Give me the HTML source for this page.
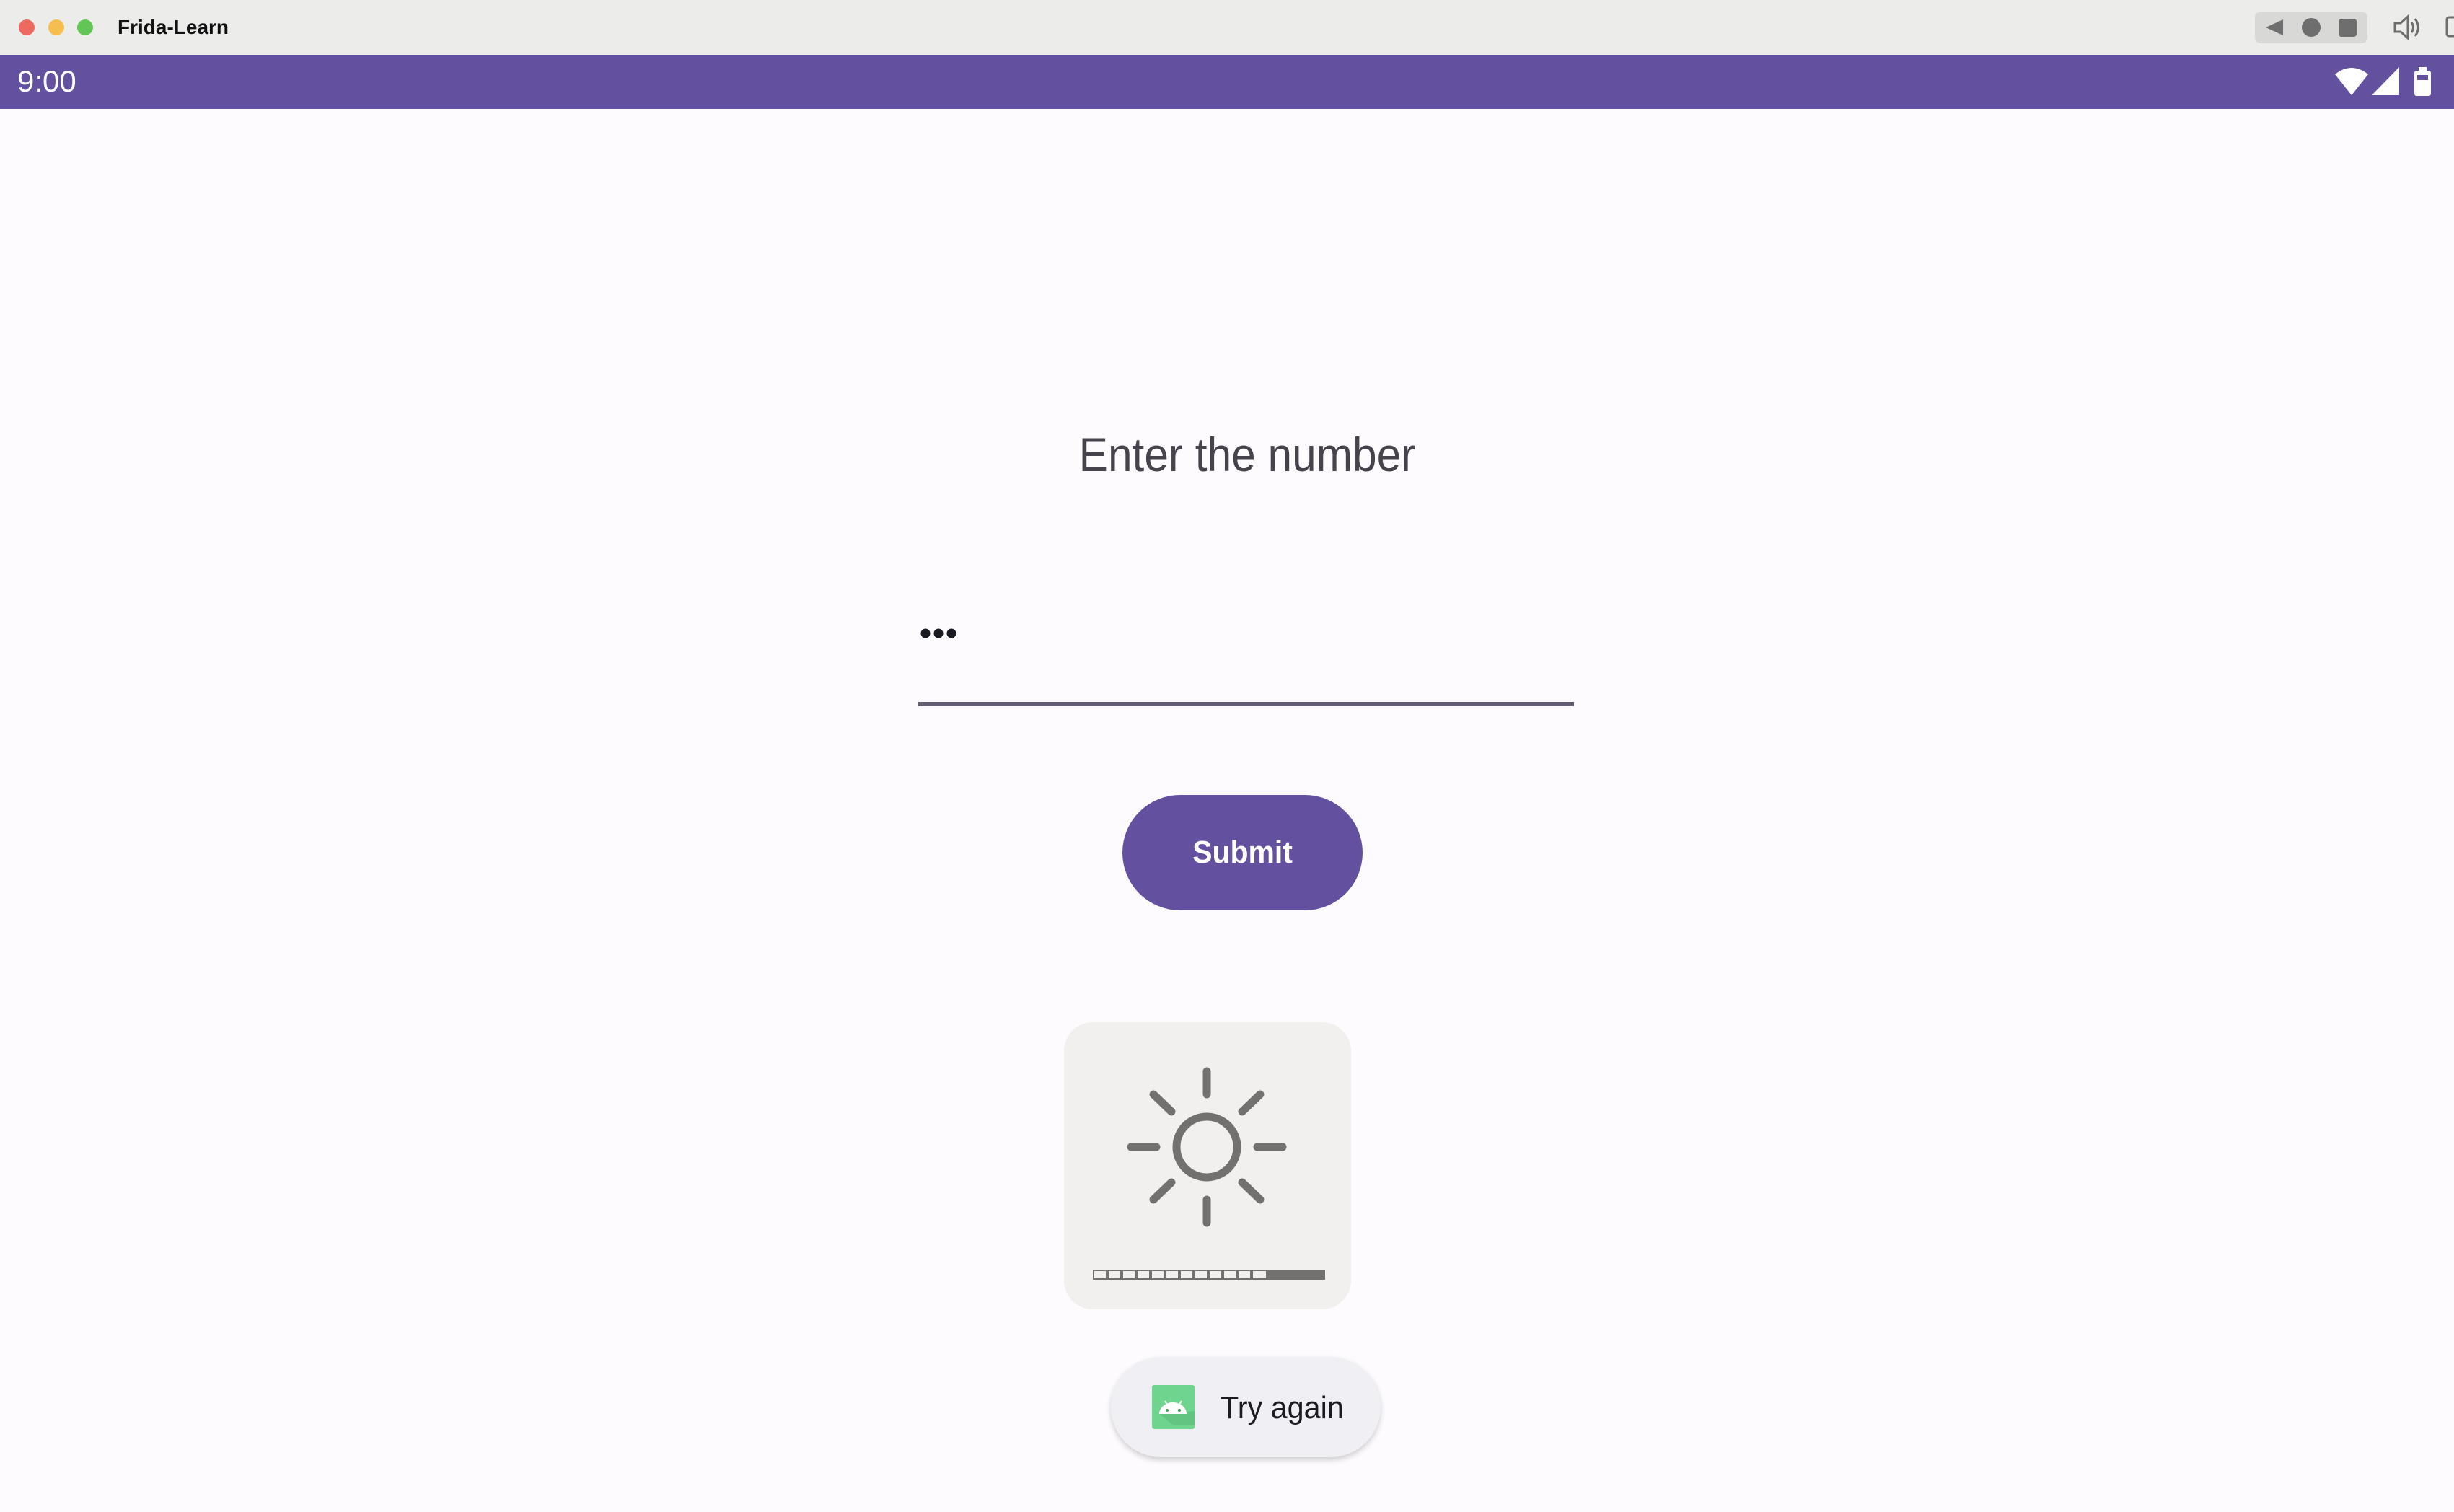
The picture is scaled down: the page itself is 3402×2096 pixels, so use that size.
<!DOCTYPE html>
<html><head><meta charset="utf-8"><style>
*{margin:0;padding:0;box-sizing:border-box}
html,body{width:3402px;height:2096px;overflow:hidden;background:#FDFBFE;font-family:"Liberation Sans",sans-serif}
.abs{position:absolute}
</style></head><body>
<div class="abs" style="left:0;top:0;width:3402px;height:76px;background:#ECECEA"></div>
<div class="abs" style="left:26px;top:27px;width:22px;height:22px;border-radius:50%;background:#EE6A5F"></div>
<div class="abs" style="left:67px;top:27px;width:22px;height:22px;border-radius:50%;background:#F5BE4F"></div>
<div class="abs" style="left:107px;top:27px;width:22px;height:22px;border-radius:50%;background:#62C655"></div>
<div class="abs" style="left:163px;top:20px;font-size:28px;font-weight:bold;color:#111;line-height:36px">Frida-Learn</div>
<div class="abs" style="left:3126px;top:16px;width:156px;height:44px;border-radius:8px;background:#D8D8D6"></div>
<svg class="abs" style="left:3126px;top:16px" width="156" height="44"><polygon points="15,22 39,11 39,33" fill="#6e6e6e"/><circle cx="78" cy="22" r="13" fill="#6e6e6e"/><rect x="116" y="10" width="25" height="25" rx="4" fill="#6e6e6e"/></svg>
<svg class="abs" style="left:3316px;top:20px" width="86" height="36"><path d="M4 12h8l10-9v30l-10-9H4z" fill="none" stroke="#6e6e6e" stroke-width="3"/><path d="M27 11q5 7 0 14M32 6q9 12 0 24" fill="none" stroke="#6e6e6e" stroke-width="3"/><rect x="76" y="4" width="14" height="26" rx="3" fill="none" stroke="#6e6e6e" stroke-width="3"/></svg>
<div class="abs" style="left:0;top:76px;width:3402px;height:75px;background:#6351A0"></div>
<div class="abs" style="left:24px;top:88px;font-size:42px;color:#fff;line-height:50px">9:00</div>
<svg class="abs" style="left:3230px;top:88px" width="150" height="50"><path d="M7 15q23-18 46 0L30 44z" fill="#fff"/><polygon points="58,44 96,44 96,5" fill="#fff"/><rect x="117" y="10" width="23" height="35" rx="3" fill="#fff"/><rect x="123" y="5" width="11" height="6" fill="#fff"/><rect x="121" y="16" width="15" height="7" fill="#6351A0"/></svg>
<div class="abs" style="left:0;top:592px;width:3458px;text-align:center;font-size:66px;color:#46434d;line-height:76px"><span style="display:inline-block;transform:scaleX(0.915)">Enter the number</span></div>
<svg class="abs" style="left:1276px;top:866px" width="56" height="24"><circle cx="7" cy="12" r="6.5" fill="#1a1a22"/><circle cx="25" cy="12" r="6.5" fill="#1a1a22"/><circle cx="43" cy="12" r="6.5" fill="#1a1a22"/></svg>
<div class="abs" style="left:1273px;top:973px;width:909px;height:6px;background:#625b71"></div>
<div class="abs" style="left:1556px;top:1102px;width:333px;height:160px;border-radius:80px;background:#6351A0;color:#fff;font-size:44px;font-weight:bold;text-align:center;line-height:160px"><span style="display:inline-block;transform:scaleX(0.93)">Submit</span></div>
<div class="abs" style="left:1475px;top:1417px;width:398px;height:398px;border-radius:40px;background:#F1F0EE"></div>
<svg class="abs" style="left:1475px;top:1417px" width="398" height="398">
<g stroke="#727170" stroke-width="11" stroke-linecap="round" fill="none">
<circle cx="198" cy="173" r="42"/>
<line x1="198" y1="68" x2="198" y2="100"/><line x1="198" y1="246" x2="198" y2="278"/>
<line x1="93" y1="173" x2="128" y2="173"/><line x1="268" y1="173" x2="303" y2="173"/>
<line x1="124" y1="100" x2="149" y2="124"/><line x1="247" y1="222" x2="272" y2="246"/>
<line x1="272" y1="100" x2="247" y2="124"/><line x1="149" y1="222" x2="124" y2="246"/>
</g>
<rect x="40" y="343" width="322" height="14" fill="#727170"/>
<g fill="#F1F0EE">
<rect x="42" y="345" width="16" height="10"/><rect x="62" y="345" width="16" height="10"/><rect x="82" y="345" width="16" height="10"/><rect x="102" y="345" width="16" height="10"/><rect x="122" y="345" width="16" height="10"/><rect x="142" y="345" width="16" height="10"/><rect x="162" y="345" width="16" height="10"/><rect x="182" y="345" width="16" height="10"/><rect x="202" y="345" width="16" height="10"/><rect x="222" y="345" width="16" height="10"/><rect x="242" y="345" width="16" height="10"/><rect x="262" y="345" width="18" height="10"/>
</g></svg>
<div class="abs" style="left:1540px;top:1881px;width:374px;height:139px;border-radius:70px;background:#F0F0F4;box-shadow:0 4px 8px rgba(0,0,0,0.18)"></div>
<svg class="abs" style="left:1597px;top:1920px" width="59" height="61"><rect width="59" height="61" rx="3" fill="#6FD58E"/><path d="M10 40L30 56H59V36z" fill="#5bb97a" opacity="0.6"/><path d="M10 40a19 16 0 0 1 38 0z" fill="#fff"/><line x1="18" y1="22" x2="22" y2="29" stroke="#fff" stroke-width="2"/><line x1="41" y1="22" x2="37" y2="29" stroke="#fff" stroke-width="2"/><circle cx="21" cy="35" r="2" fill="#3ba55c"/><circle cx="38" cy="35" r="2" fill="#3ba55c"/></svg>
<div class="abs" style="left:1692px;top:1924px;font-size:44px;color:#1d1b20;line-height:56px;transform-origin:left center;transform:scaleX(0.94)">Try again</div>
</body></html>
